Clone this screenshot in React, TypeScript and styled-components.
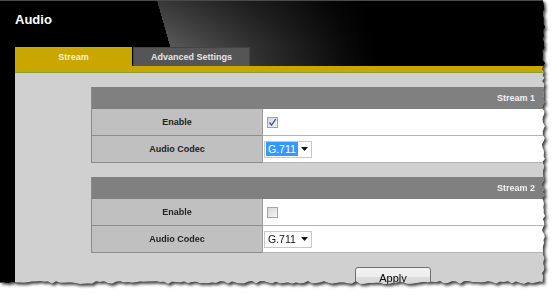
import React from "react";
import styled, { createGlobalStyle } from "styled-components";

const PAGE_W = 546;
const PAGE_H = 285;

function rnd(i: number): number {
  const v = Math.sin(i * 12.9898 + 78.233) * 43758.5453;
  return v - Math.floor(v);
}

function tornPolygon(): string {
  const pts: string[] = ["0px 0px"];
  let i = 1;
  for (let y = 0; y <= PAGE_H - 3; y += 3) {
    const x = PAGE_W - 1 - rnd(i++) * 3;
    pts.push(`${x.toFixed(1)}px ${y}px`);
  }
  for (let x = PAGE_W - 2; x >= 0; x -= 4) {
    const y = PAGE_H - 1 - rnd(i++) * 3;
    pts.push(`${x}px ${y.toFixed(1)}px`);
  }
  pts.push(`0px ${PAGE_H - 2}px`);
  return `polygon(${pts.join(", ")})`;
}

const TORN = tornPolygon();

const GlobalStyle = createGlobalStyle`
  html, body {
    margin: 0;
    padding: 0;
    background: #ffffff;
  }
  body {
    font-family: "Liberation Sans", Arial, sans-serif;
  }
`;

const Frame = styled.div`
  width: 557px;
  height: 298px;
  filter: drop-shadow(2px 2px 1.5px rgba(0, 0, 0, 0.75));
`;

const Page = styled.div`
  width: ${PAGE_W}px;
  height: ${PAGE_H}px;
  background: #000;
  display: flex;
  flex-direction: column;
  clip-path: ${TORN};
`;

const TopArea = styled.header`
  flex: none;
  height: 66px;
  box-sizing: border-box;
  border-top: 1px solid #4a4a4a;
  padding-left: 15px;
  display: flex;
  flex-direction: column;
  background:
    linear-gradient(to bottom, rgba(0, 0, 0, 0.35), rgba(0, 0, 0, 0) 70%),
    linear-gradient(74deg, #000 0, #000 169px, #585858 169px, #303030 250px, #0a0a0a 335px, #000 365px);
`;

const Title = styled.h1`
  flex: 1;
  margin: 0;
  padding-top: 11px;
  font: bold 13px/15px "Liberation Sans", Arial, sans-serif;
  color: #ffffff;
`;

const Tabs = styled.nav`
  display: flex;
  height: 19px;
  gap: 1px;
`;

const Tab = styled.div<{ $active?: boolean }>`
  width: 117px;
  box-sizing: border-box;
  display: flex;
  align-items: center;
  justify-content: center;
  font: bold 9px "Liberation Sans", Arial, sans-serif;
  color: ${(p) => (p.$active ? "#f6efcf" : "#e6e6e6")};
  background: ${(p) => (p.$active ? "#c9a700" : "#555555")};
  border: ${(p) => (p.$active ? "none" : "1px solid #444")};
  border-bottom: none;
`;

const Body = styled.main`
  flex: 1;
  margin-left: 15px;
  display: flex;
  flex-direction: column;
`;

const YellowBar = styled.div`
  height: 6px;
  background: #c9a700;
  border-bottom: 1px solid #84a03c;
`;

const Content = styled.div`
  flex: 1;
  background: #d0d0d0;
  padding: 14px 0 0 76px;
  display: flex;
  flex-direction: column;
  gap: 14px;
`;

const Panel = styled.section`
  display: grid;
  grid-template-columns: 170px 1fr;
  border-left: 1px solid #8a8a8a;
`;

const PanelHead = styled.div`
  grid-column: 1 / -1;
  height: 22px;
  background: #808080;
  display: flex;
  align-items: center;
  justify-content: flex-end;
  padding-right: 11px;
  font: bold 9px "Liberation Sans", Arial, sans-serif;
  color: #f2f2f2;
`;

const LabelCell = styled.div`
  height: 26px;
  background: #c0c0c0;
  border-bottom: 1px solid #8c8c8c;
  display: flex;
  align-items: center;
  justify-content: center;
  font: bold 9px "Liberation Sans", Arial, sans-serif;
  color: #222;
`;

const ValueCell = styled.div`
  height: 26px;
  background: #ffffff;
  border-left: 1px solid #9a9a9a;
  border-bottom: 1px solid #b4b4b4;
  display: flex;
  align-items: center;
`;

const CheckBox = styled.span<{ $checked?: boolean }>`
  width: 11px;
  height: 11px;
  margin-left: 4px;
  box-sizing: border-box;
  border: 1px solid #a2a2a2;
  background: linear-gradient(135deg, #d6d6d6, #f6f6f6);
  display: flex;
  align-items: center;
  justify-content: center;
`;

const SelectBox = styled.div`
  width: 48px;
  height: 17px;
  margin-left: 1px;
  box-sizing: border-box;
  border: 1px solid #c8c8c8;
  background: #fff;
  display: flex;
  align-items: center;
  padding-left: 1px;
`;

const SelectValue = styled.span<{ $focused?: boolean }>`
  height: 14px;
  padding: 0 2px;
  font: 10.5px/14px "Liberation Sans", Arial, sans-serif;
  color: ${(p) => (p.$focused ? "#fff" : "#111")};
  background: ${(p) => (p.$focused ? "#3399ff" : "transparent")};
`;

const Arrow = styled.svg`
  margin-left: auto;
  margin-right: 3px;
`;

const ApplyRow = styled.div`
  padding-left: 264px;
`;

const Button = styled.button`
  width: 76px;
  height: 21px;
  border: 1px solid #707070;
  border-radius: 3px;
  background: linear-gradient(#f3f3f3, #ececec 50%, #dedede 50%, #d2d2d2);
  font: 11px "Liberation Sans", Arial, sans-serif;
  color: #000;
  padding: 0;
`;

function Check({ checked }: { checked: boolean }) {
  return (
    <CheckBox $checked={checked}>
      {checked && (
        <svg width="9" height="9" viewBox="0 0 9 9">
          <path d="M1.5 4.5 L3.6 7.2 L7.8 1" fill="none" stroke="#3b4f9c" strokeWidth="1.3" />
        </svg>
      )}
    </CheckBox>
  );
}

function CodecSelect({ focused }: { focused: boolean }) {
  return (
    <SelectBox>
      <SelectValue $focused={focused}>G.711</SelectValue>
      <Arrow width="7" height="4" viewBox="0 0 7 4">
        <path d="M0 0 L7 0 L3.5 4 Z" fill="#111" />
      </Arrow>
    </SelectBox>
  );
}

function StreamPanel({ title, checked, focused }: { title: string; checked: boolean; focused: boolean }) {
  return (
    <Panel>
      <PanelHead>{title}</PanelHead>
      <LabelCell>Enable</LabelCell>
      <ValueCell>
        <Check checked={checked} />
      </ValueCell>
      <LabelCell>Audio Codec</LabelCell>
      <ValueCell>
        <CodecSelect focused={focused} />
      </ValueCell>
    </Panel>
  );
}

export default function App() {
  return (
    <>
      <GlobalStyle />
      <Frame>
        <Page>
          <TopArea>
            <Title>Audio</Title>
            <Tabs>
              <Tab $active>Stream</Tab>
              <Tab>Advanced Settings</Tab>
            </Tabs>
          </TopArea>
          <Body>
            <YellowBar />
            <Content>
              <StreamPanel title="Stream 1" checked focused />
              <StreamPanel title="Stream 2" checked={false} focused={false} />
              <ApplyRow>
                <Button>Apply</Button>
              </ApplyRow>
            </Content>
          </Body>
        </Page>
      </Frame>
    </>
  );
}
